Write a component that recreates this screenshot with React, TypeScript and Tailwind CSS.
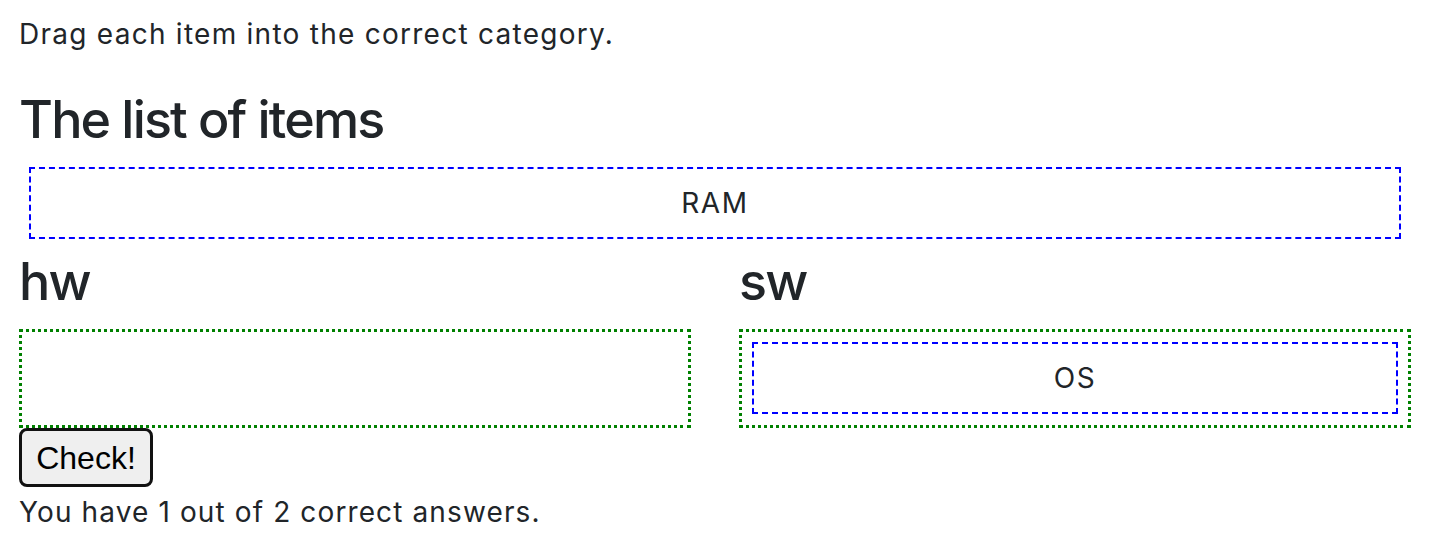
const categories = [
  { name: "hw", items: [] as string[] },
  { name: "sw", items: ["OS"] },
]

const pool = ["RAM"]

function Item({ label }: { label: string }) {
  return (
    <div className="m-[10px] flex h-[72px] items-center justify-center border-2 border-dashed border-[#0000ff] text-[28px] tracking-[0.06em]">
      {label}
    </div>
  )
}

export default function App() {
  return (
    <div className="min-h-[552px] bg-white pl-[19px] pt-[15px] font-['Inter','Liberation_Sans',sans-serif] text-[#212529]">
      <div className="w-[1392px]">
        <p className="text-[28px] leading-[39px] tracking-[0.045em]">Drag each item into the correct category.</p>

        <h2 className="mt-[35px] text-[52px] leading-[62px] font-medium tracking-[-0.035em]">The list of items</h2>

        {/* Unsorted items */}
        <div className="mt-[16px]">
          {pool.map((item) => (
            <Item key={item} label={item} />
          ))}
        </div>

        {/* Categories */}
        <div className="grid grid-cols-2 gap-x-[48px]">
          {categories.map((cat) => (
            <div key={cat.name}>
              <h2 className="mt-[2px] mb-[16px] text-[52px] leading-[62px] font-medium tracking-[-0.035em]">
                {cat.name}
              </h2>
              <div className="h-[99px] border-[3px] border-dotted border-[#008000]">
                {cat.items.map((item) => (
                  <Item key={item} label={item} />
                ))}
              </div>
            </div>
          ))}
        </div>

        <button className="flex h-[59px] w-[134px] items-center justify-center rounded-[8px] border-[3px] border-[#111111] bg-[#efefef] font-['Liberation_Sans',Arial,sans-serif] text-[32px] text-black">
          Check!
        </button>
        <p className="mt-[6px] text-[28px] leading-[39px] tracking-[0.04em]">You have 1 out of 2 correct answers.</p>
      </div>
    </div>
  )
}
